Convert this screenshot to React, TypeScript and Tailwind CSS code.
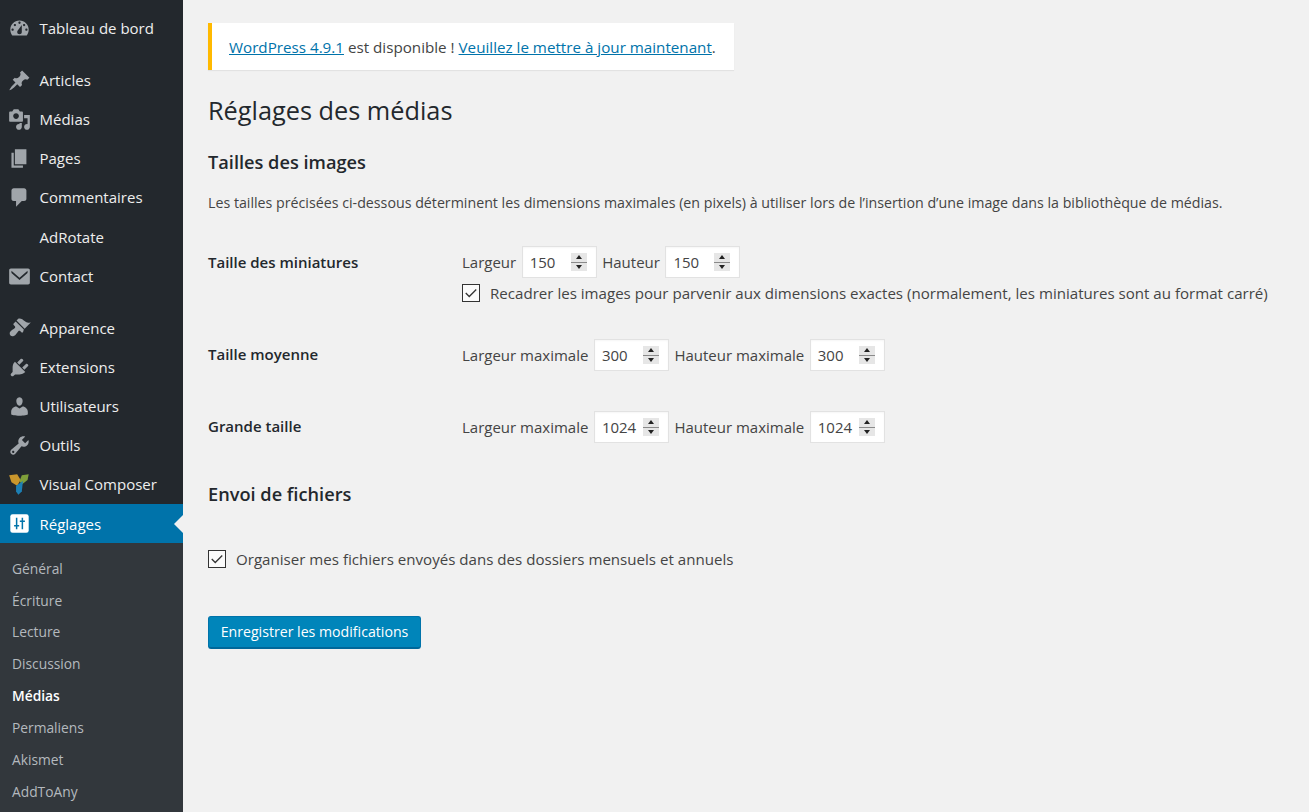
import type { ReactNode } from "react";

const ICONS: Record<string, string> = {
  dashboard:
    "M3.76 16h12.48c1.1-1.37 1.76-3.11 1.76-5 0-4.42-3.58-8-8-8s-8 3.58-8 8c0 1.89.66 3.63 1.76 5zM10 4c.55 0 1 .45 1 1s-.45 1-1 1-1-.45-1-1 .45-1 1-1zM6 6c.55 0 1 .45 1 1s-.45 1-1 1-1-.45-1-1 .45-1 1-1zm8 0c.55 0 1 .45 1 1s-.45 1-1 1-1-.45-1-1 .45-1 1-1zm-5.37 5.55L12 7v6c0 1.1-.9 2-2 2s-2-.9-2-2c0-.57.24-1.08.63-1.45zM4 10c.55 0 1 .45 1 1s-.45 1-1 1-1-.45-1-1 .45-1 1-1zm12 0c.55 0 1 .45 1 1s-.45 1-1 1-1-.45-1-1 .45-1 1-1z",
  pin: "M10.44 3.02l1.82-1.82 6.36 6.35-1.83 1.82c-1.05-.68-2.48-.57-3.41.36l-.75.75c-.92.93-1.04 2.35-.35 3.41l-1.83 1.82-2.41-2.41-2.8 2.79c-.42.42-3.38 2.71-3.8 2.29s1.86-3.39 2.28-3.81l2.79-2.79L4.1 9.36l1.83-1.82c1.05.69 2.48.57 3.41-.36l.75-.75c.93-.92 1.04-2.35.35-3.41z",
  media:
    "M13 11V4c0-.55-.45-1-1-1h-1.67L9 1H5L3.67 3H2c-.55 0-1 .45-1 1v7c0 .55.45 1 1 1h10c.55 0 1-.45 1-1zM7 4.5c1.38 0 2.5 1.12 2.5 2.5S8.38 9.5 7 9.5 4.5 8.38 4.5 7 5.62 4.5 7 4.5zM14 6h5v10.5c0 1.38-1.12 2.5-2.5 2.5S14 17.88 14 16.5s1.12-2.5 2.5-2.5c.17 0 .34.02.5.05V9h-3V6zm-4 8.05V13h2v3.5c0 1.38-1.12 2.5-2.5 2.5S7 17.88 7 16.5 8.12 14 9.5 14c.17 0 .34.02.5.05z",
  page: "M6 15V2h10v13H6zm-1 1h8v2H3V5h2v11z",
  comments: "M5 2h9c1.1 0 2 .9 2 2v7c0 1.1-.9 2-2 2h-2l-5 5v-5H5c-1.1 0-2-.9-2-2V4c0-1.1.9-2 2-2z",
  email:
    "M1 4.5C1 3.7 1.7 3 2.5 3h15c.8 0 1.5.7 1.5 1.5v11c0 .8-.7 1.5-1.5 1.5h-15C1.7 17 1 16.3 1 15.5v-11zM3 5l7 6 7-6v2l-7 6-7-6V5z",
  appearance:
    "M14.48 11.06L7.41 3.99l1.5-1.5c.5-.56 2.3-.47 3.51.32 1.21.8 1.43 1.28 2.91 2.1 1.18.64 2.45 1.26 4.45.85zm-.71.71L6.7 4.7 4.93 6.47c-.39.39-.39 1.02 0 1.41l1.06 1.06c.39.39.39 1.03 0 1.42-.6.6-1.43 1.11-2.21 1.69-.35.26-.7.53-1.01.84C1.43 13.71.96 15.65 2.15 16.85s3.14.72 4.48-.62c.31-.31.58-.66.84-1.01.58-.78 1.09-1.61 1.69-2.21.39-.39 1.02-.39 1.41 0l1.06 1.06c.39.39 1.02.39 1.41 0z",
  plugins:
    "M13.11 4.36L9.87 7.6 8 5.73l3.24-3.24c.35-.34 1.05-.2 1.56.32.52.51.66 1.21.31 1.55zm-8 1.77l.91-1.12 9.01 9.01-1.19.84c-.71.71-2.63 1.16-3.82 1.16H6.14L4.9 17.26c-.59.59-1.54.59-2.12 0-.59-.58-.59-1.53 0-2.12l1.24-1.24v-3.88c0-1.13.4-3.19 1.09-3.89zm7.26 3.97l3.24-3.24c.34-.35 1.04-.21 1.55.31.52.51.66 1.21.31 1.55l-3.24 3.25z",
  users:
    "M10 9.25c-2.27 0-2.73-3.44-2.73-3.44C7 4.02 7.82 2 9.97 2c2.16 0 2.98 2.02 2.71 3.81 0 0-.41 3.44-2.68 3.44zm0 2.57L12.72 10c2.39 0 4.52 2.33 4.52 4.53v2.49s-3.65 1.13-7.24 1.13c-3.65 0-7.24-1.13-7.24-1.13v-2.49c0-2.25 1.94-4.48 4.47-4.48z",
  tools:
    "M16.68 9.77c-1.34 1.34-3.3 1.67-4.95.99l-5.41 6.52c-.99.99-2.59.99-3.58 0s-.99-2.59 0-3.57l6.52-5.42c-.68-1.65-.35-3.61.99-4.95 1.28-1.28 3.12-1.62 4.72-1.06l-2.89 2.89 2.82 2.82 2.86-2.87c.53 1.58.18 3.39-1.08 4.65zM3.81 16.21c.4.39 1.04.39 1.43 0 .4-.4.4-1.04 0-1.43-.39-.4-1.03-.4-1.43 0-.39.39-.39 1.03 0 1.43z",
};

function MenuIcon({ name, active }: { name: string; active?: boolean }) {
  if (name === "vc") {
    return (
      <svg viewBox="0 0 20 20" className="h-[23px] w-[23px]">
        <path d="M1 2l7-1 3 5-3 5-5-3z" fill="#c9962c" />
        <path d="M10 7l2-5 6-1-1 5-5 4z" fill="#7f9f3a" />
        <path d="M7 11l6-4-1 9-3 3-2-3z" fill="#1c7fb4" />
      </svg>
    );
  }
  if (name === "settings") {
    return (
      <svg viewBox="0 0 20 20" className="h-[23px] w-[23px]">
        <rect x="2" y="2" width="16" height="16" rx="2" fill="#fff" />
        <path d="M7.5 5v10M5.3 12h4.4M12.5 5v10M10.3 8h4.4" fill="none" stroke="#0073aa" strokeWidth="1.3" />
      </svg>
    );
  }
  if (!name) return <span className="h-[23px] w-[23px]" />;
  return (
    <svg viewBox="0 0 20 20" className={`h-[23px] w-[23px] ${active ? "fill-white" : "fill-[#a0a5aa]"}`}>
      <path fillRule="evenodd" d={ICONS[name]} />
    </svg>
  );
}

function MenuItem({ icon, label, active }: { icon: string; label: string; active?: boolean }) {
  return (
    <div className={`relative flex h-[39.2px] items-center gap-[8.5px] pl-[8px] text-[15px] ${active ? "bg-[#0073aa] text-white" : "text-[#eeeeee]"}`}>
      <MenuIcon name={icon} active={active} />
      <span>{label}</span>
      {active && (
        <span className="absolute right-0 top-[11px] border-y-[9px] border-r-[9px] border-y-transparent border-r-[#f1f1f1]" />
      )}
    </div>
  );
}

function SubItem({ label, current }: { label: string; current?: boolean }) {
  return (
    <div className={`flex h-[31.9px] items-center pl-[12px] text-[13.8px] ${current ? "font-semibold text-white" : "text-[#b4b9be]"}`}>
      {label}
    </div>
  );
}

function Spinner() {
  return (
    <span className="flex h-[18px] w-[16px] flex-col bg-[#e6e6e6]">
      <span className="flex flex-1 items-center justify-center border-b border-[#8a8a8a]">
        <span className="border-x-[3px] border-b-[4px] border-x-transparent border-b-[#222]" />
      </span>
      <span className="flex flex-1 items-center justify-center">
        <span className="border-x-[3px] border-t-[4px] border-x-transparent border-t-[#222]" />
      </span>
    </span>
  );
}

function NumberBox({ value }: { value: string }) {
  return (
    <span className="flex h-[32px] w-[75px] items-center justify-between border border-[#e2e2e2] bg-white pl-[7px] pr-[9px] shadow-[inset_0_1px_2px_rgba(0,0,0,0.04)]">
      <span className="pt-[1px]">{value}</span>
      <Spinner />
    </span>
  );
}

function CheckBox() {
  return (
    <span className="flex h-[18px] w-[18px] items-center justify-center border border-[#333] bg-[#fbfbfb]">
      <svg viewBox="0 0 16 16" className="h-[14px] w-[14px] fill-none stroke-[#333] stroke-[1.5]">
        <path d="M2 8l4 4 8-8" />
      </svg>
    </span>
  );
}

function Row({ title, className, titleClass, children }: { title: string; className: string; titleClass: string; children: ReactNode }) {
  return (
    <div className={`flex ${className}`}>
      <div className={`w-[254px] shrink-0 font-semibold text-[#23282d] ${titleClass}`}>{title}</div>
      <div>{children}</div>
    </div>
  );
}

function Sizes({ wLabel, hLabel, value }: { wLabel: string; hLabel: string; value: string }) {
  return (
    <div className="flex items-center gap-[5.5px]">
      <span>{wLabel}</span>
      <NumberBox value={value} />
      <span>{hLabel}</span>
      <NumberBox value={value} />
    </div>
  );
}

export default function App() {
  return (
    <div className="flex h-[812px] w-[1309px] overflow-hidden bg-[#f1f1f1] font-['Open_Sans',sans-serif] text-[15px] text-[#444444]">
      <aside className="w-[183px] shrink-0 bg-[#23282d]">
        <div className="pt-[9px]">
          <MenuItem icon="dashboard" label="Tableau de bord" />
        </div>
        <div className="pt-[12.4px]">
          <MenuItem icon="pin" label="Articles" />
          <MenuItem icon="media" label="Médias" />
          <MenuItem icon="page" label="Pages" />
          <MenuItem icon="comments" label="Commentaires" />
          <MenuItem icon="" label="AdRotate" />
          <MenuItem icon="email" label="Contact" />
        </div>
        <div className="pt-[12.6px]">
          <MenuItem icon="appearance" label="Apparence" />
          <MenuItem icon="plugins" label="Extensions" />
          <MenuItem icon="users" label="Utilisateurs" />
          <MenuItem icon="tools" label="Outils" />
          <MenuItem icon="vc" label="Visual Composer" />
          <MenuItem icon="settings" label="Réglages" active />
        </div>
        <div className="h-[300px] bg-[#32373c] pt-[9.7px]">
          <SubItem label="Général" />
          <SubItem label="Écriture" />
          <SubItem label="Lecture" />
          <SubItem label="Discussion" />
          <SubItem label="Médias" current />
          <SubItem label="Permaliens" />
          <SubItem label="Akismet" />
          <SubItem label="AddToAny" />
        </div>
      </aside>

      <main className="min-w-0 flex-1 pl-[25px] pt-[23px]">
        <div className="flex h-[47px] w-[526px] items-center border-l-[4px] border-[#ffb900] bg-white pl-[17px] pt-[1px] text-[15.2px] shadow-[0_1px_1px_rgba(0,0,0,0.06)]">
          <span>
            <a className="text-[#0073aa] underline">WordPress 4.9.1</a> est disponible !{" "}
            <a className="text-[#0073aa] underline">Veuillez le mettre à jour maintenant</a>.
          </span>
        </div>

        <h1 className="mt-[22px] h-[36px] text-[25.3px] leading-[36px] text-[#23282d]">Réglages des médias</h1>
        <h2 className="mt-[20px] h-[28px] text-[18.2px] font-semibold leading-[28px] text-[#23282d]">Tailles des images</h2>
        <p className="mt-[15px] h-[24px] text-[14.23px] leading-[24px]">
          Les tailles précisées ci-dessous déterminent les dimensions maximales (en pixels) à utiliser lors de l’insertion d’une image dans la bibliothèque de médias.
        </p>

        <Row title="Taille des miniatures" titleClass="pt-[5px]" className="mt-[31px] h-[93px]">
          <Sizes wLabel="Largeur" hLabel="Hauteur" value="150" />
          <div className="mt-[4px] flex items-center gap-[10px]">
            <CheckBox />
            <span className="text-[15.1px]">Recadrer les images pour parvenir aux dimensions exactes (normalement, les miniatures sont au format carré)</span>
          </div>
        </Row>
        <Row title="Taille moyenne" titleClass="pt-[4px]" className="h-[72px]">
          <Sizes wLabel="Largeur maximale" hLabel="Hauteur maximale" value="300" />
        </Row>
        <Row title="Grande taille" titleClass="pt-[4px]" className="h-[52px]">
          <Sizes wLabel="Largeur maximale" hLabel="Hauteur maximale" value="1024" />
        </Row>

        <h2 className="mt-[17px] h-[28px] text-[18.2px] font-semibold leading-[28px] text-[#23282d]">Envoi de fichiers</h2>
        <div className="mt-[39px] flex h-[24px] items-center gap-[10px]">
          <CheckBox />
          <span className="text-[15.1px]">Organiser mes fichiers envoyés dans des dossiers mensuels et annuels</span>
        </div>
        <button className="mt-[45px] h-[33px] w-[213px] rounded-[3px] border border-[#0073aa] border-b-[2px] border-b-[#006799] bg-[#0085ba] text-[14.15px] text-white">
          Enregistrer les modifications
        </button>
      </main>
    </div>
  );
}
